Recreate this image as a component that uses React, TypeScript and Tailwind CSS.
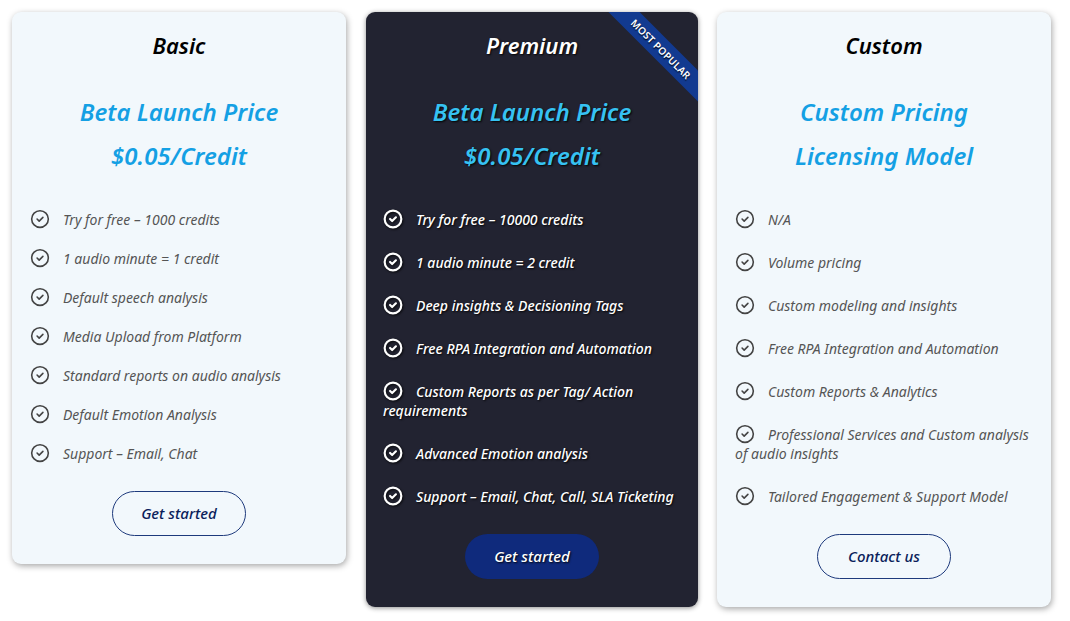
import React from "react";

function Check({ dark }: { dark?: boolean }) {
  return (
    <svg
      width="20"
      height="20"
      viewBox="0 0 24 24"
      fill="none"
      stroke={dark ? "#ffffff" : "#444444"}
      strokeWidth={dark ? 2.6 : 1.9}
      strokeLinecap="round"
      strokeLinejoin="round"
      className="inline-block align-[-4px] mr-[13px]"
      style={dark ? { filter: "drop-shadow(1px 1px 1px rgba(0,0,0,0.8))" } : undefined}
    >
      <circle cx="12" cy="12" r="10" />
      <path d="m8.5 12 2.5 2.5 4.5-4.5" />
    </svg>
  );
}

type CardProps = {
  title: string;
  line1: string;
  line2: string;
  features: string[];
  button: string;
  dark?: boolean;
  width: string;
  gapClass: string;
  padClass: string;
  popular?: boolean;
};

function Card({ title, line1, line2, features, button, dark, width, gapClass, padClass, popular }: CardProps) {
  return (
    <div
      className={`relative overflow-hidden rounded-[9px] ${width} ${
        dark ? "bg-[#222331] shadow-[0_1px_5px_rgba(0,0,0,0.45)]" : "bg-[#f2f8fc] shadow-[1px_2px_6px_rgba(0,0,0,0.35)]"
      } pt-[17px] pb-[28px] flex flex-col items-center`}
    >
      {popular && (
        <div className="absolute top-[26px] right-[-38px] w-[150px] h-[22px] rotate-45 bg-[#123a90] flex items-center justify-center">
          <span className="text-white text-[10px] font-semibold tracking-[0.2px] leading-none [text-shadow:1px_1px_1px_rgba(0,0,0,0.7)]">
            MOST POPULAR
          </span>
        </div>
      )}
      <div
        className={`text-[22px] leading-[32px] italic font-semibold ${
          dark ? "text-white [text-shadow:1px_1px_2px_rgba(0,0,0,0.9)]" : "text-black"
        }`}
      >
        {title}
      </div>
      <div
        className={`mt-[29px] text-[24px] leading-[44px] italic font-semibold ${
          dark ? "text-[#36c2f2] [text-shadow:1px_1px_2px_rgba(0,0,0,0.9)]" : "text-[#14a0e4]"
        }`}
      >
        {line1}
      </div>
      <div
        className={`text-[24px] leading-[44px] italic font-semibold ${
          dark ? "text-[#36c2f2] [text-shadow:1px_1px_2px_rgba(0,0,0,0.9)]" : "text-[#14a0e4]"
        }`}
      >
        {line2}
      </div>
      <ul className={`self-stretch mt-[31px] ${padClass} pr-[10px] flex flex-col ${gapClass}`}>
        {features.map((f) => (
          <li
            key={f}
            className={`text-[14px] leading-[19px] italic ${
              dark ? "text-white font-medium [text-shadow:1px_1px_2px_rgba(0,0,0,0.9)]" : "text-[#555555]"
            }`}
          >
            <Check dark={dark} />
            {f}
          </li>
        ))}
      </ul>
      <button
        className={`mt-[28px] w-[134px] h-[45px] rounded-full text-[15px] italic flex items-center justify-center ${
          dark
            ? "bg-[#0f2a7c] text-white font-medium [text-shadow:1px_1px_2px_rgba(0,0,0,0.9)]"
            : "border border-[#1e3a7c] text-[#0b1e5b] font-medium bg-transparent"
        }`}
      >
        {button}
      </button>
    </div>
  );
}

export default function App() {
  return (
    <div
      className="w-[1070px] h-[621px] bg-white pl-[12px] pt-[12px] flex items-start"
      style={{ fontFamily: '"Noto Sans", "Open Sans", sans-serif' }}
    >
      <Card
        title="Basic"
        line1="Beta Launch Price"
        line2="$0.05/Credit"
        width="w-[334px]"
        gapClass="gap-[19px]"
        padClass="pl-[18px]"
        features={[
          "Try for free – 1000 credits",
          "1 audio minute = 1 credit",
          "Default speech analysis",
          "Media Upload from Platform",
          "Standard reports on audio analysis",
          "Default Emotion Analysis",
          "Support – Email, Chat",
        ]}
        button="Get started"
      />
      <div className="ml-[20px]">
        <Card
          dark
          popular
          title="Premium"
          line1="Beta Launch Price"
          line2="$0.05/Credit"
          width="w-[332px]"
          gapClass="gap-[23px]"
          padClass="pl-[17px]"
          features={[
            "Try for free – 10000 credits",
            "1 audio minute = 2 credit",
            "Deep insights & Decisioning Tags",
            "Free RPA Integration and Automation",
            "Custom Reports as per Tag/ Action requirements",
            "Advanced Emotion analysis",
            "Support – Email, Chat, Call, SLA Ticketing",
          ]}
          button="Get started"
        />
      </div>
      <div className="ml-[19px]">
        <Card
          title="Custom"
          line1="Custom Pricing"
          line2="Licensing Model"
          width="w-[334px]"
          gapClass="gap-[23px]"
          padClass="pl-[18px]"
          features={[
            "N/A",
            "Volume pricing",
            "Custom modeling and insights",
            "Free RPA Integration and Automation",
            "Custom Reports & Analytics",
            "Professional Services and Custom analysis of audio insights",
            "Tailored Engagement & Support Model",
          ]}
          button="Contact us"
        />
      </div>
    </div>
  );
}
